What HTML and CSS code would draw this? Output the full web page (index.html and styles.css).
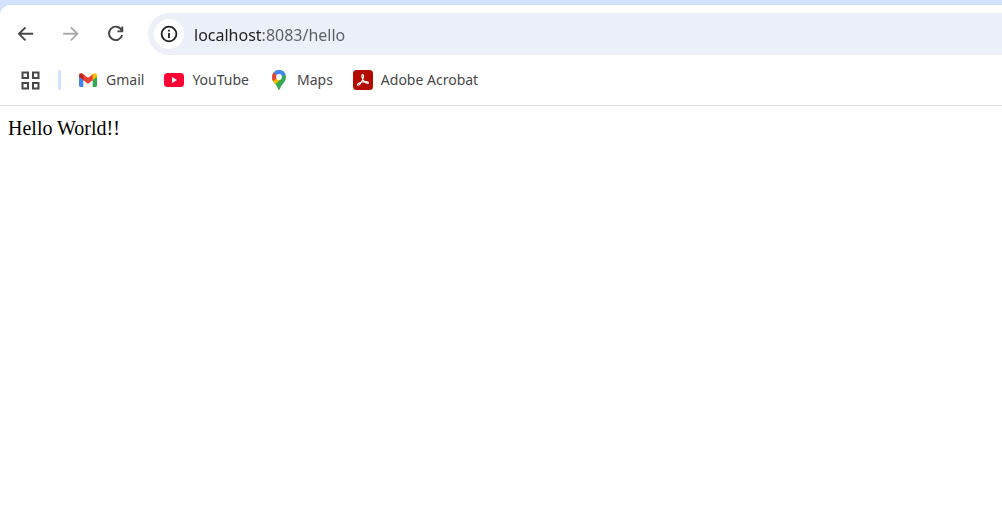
FILE: index.html
```html
<!DOCTYPE html>
<html lang="en">
<head>
<meta charset="utf-8">
<title>localhost:8083/hello</title>
<link rel="stylesheet" href="styles.css">
</head>
<body>
<header class="chrome">
  <div class="toolbar">
    <nav class="nav" aria-label="History">
      <button class="nav-button" type="button" aria-label="Back">
        <svg class="icon" viewBox="0 0 20 20"><path d="M17.200 9.800H3.500M9.500 3.300 3 9.800l6.500 6.500"/></svg>
      </button>
      <button class="nav-button" type="button" aria-label="Forward" disabled>
        <svg class="icon" viewBox="0 0 20 20"><path d="M2.200 9.800h13.700M9.900 3.300l6.500 6.500-6.500 6.500"/></svg>
      </button>
      <button class="nav-button" type="button" aria-label="Reload">
        <svg class="icon" viewBox="0 0 20 20"><path d="M15.600 6.200A6.700 6.700 0 1 0 16.200 11M16.300 2.500v4.900h-4.900"/></svg>
      </button>
    </nav>
    <div class="omnibox">
      <button class="site-info" type="button" aria-label="View site information">
        <svg class="info-icon" viewBox="0 0 18 18"><circle cx="9" cy="9" r="7.400"/><path d="M9 8v5M9 4.800v1.800"/></svg>
      </button>
      <input class="url" type="text" aria-label="Address" value="localhost:8083/hello" spellcheck="false">
    </div>
  </div>
  <nav class="bookmarks" aria-label="Bookmarks">
    <button class="tab-groups" type="button" aria-label="Tab groups">
      <svg class="grid-icon" viewBox="0 0 21 21"><path d="M2.500 2.500h5.500v5.500H2.500zM13 2.500h5.500v5.500H13zM2.500 13h5.500v5.500H2.500zM13 13h5.500v5.500H13z"/></svg>
    </button>
    <span class="divider"></span>
    <a class="bookmark" href="#gmail">
      <svg class="logo" viewBox="0 0 20 20">
        <path fill="#4285f4" d="M1 6v9.500c0 .8.6 1.400 1.400 1.400h2.900V9.300z"/>
        <path fill="#34a853" d="M14.700 16.900h2.900c.8 0 1.400-.6 1.400-1.400V6l-4.300 3.300z"/>
        <path fill="#ea4335" d="M4.800 10V4L10 7.700 15.200 4v6L10 13.800z"/>
        <path fill="#c5221f" d="M1 5.200v1.500l4.300 3.200V4.500l-.9-.7C2.900 2.700 1 3.600 1 5.200z"/>
        <path fill="#fbbc04" d="M19 5.200v1.500l-4.300 3.200V4.500l.9-.7C17.100 2.700 19 3.600 19 5.200z"/>
      </svg>
      <span>Gmail</span>
    </a>
    <a class="bookmark" href="#youtube">
      <svg class="logo" viewBox="0 0 20 20">
        <rect y="3" width="20" height="14" rx="3.500" fill="#ff0033"/>
        <path fill="#fff" d="M8 7v6l5.200-3z"/>
      </svg>
      <span>YouTube</span>
    </a>
    <a class="bookmark" href="#maps">
      <svg class="logo" viewBox="0 0 20 20">
        <defs><clipPath id="pin"><path d="M10 0a7 7 0 0 1 7 7c0 3.200-1.600 5-3.200 7.100C12.300 16 11.500 17.200 11 18.800c-.3 1.500-1.700 1.500-2 0-.5-1.600-1.300-2.800-2.800-4.700C4.600 12 3 10.200 3 7a7 7 0 0 1 7-7z"/></clipPath></defs>
        <g clip-path="url(#pin)">
          <path fill="#34a853" d="M0 0h20v20H0z"/>
          <path fill="#fbbc04" d="M0 8 5 7l7 2-6.500 6L0 14z"/>
          <path fill="#ea4335" d="M4.700 2 10 7 4.300 11 0 9V2z"/>
          <path fill="#4285f4" d="M4.700 2.500 7 0h10l-.3 4.500L10 7z"/>
        </g>
        <circle cx="10" cy="7" r="2.900" fill="#fff"/>
      </svg>
      <span>Maps</span>
    </a>
    <a class="bookmark" href="#acrobat">
      <svg class="logo" viewBox="0 0 20 20">
        <rect width="20" height="20" rx="3.500" fill="#b30b00"/>
        <path fill="none" stroke="#fff" stroke-width="1.200" stroke-linejoin="round" d="M9.500 4.500c1.600-.2 1.200 3-.2 6-1.400 2.900-3.600 5.400-4.600 4.600-1-.9 1.400-2.400 4.200-3.100 2.800-.7 6.600-.7 6.600.7 0 1.500-2.800.5-4.500-1.500C9.100 9.100 8 4.800 9.500 4.500z"/>
      </svg>
      <span>Adobe Acrobat</span>
    </a>
  </nav>
</header>
<main class="page">Hello World!!</main>
</body>
</html>
```
FILE: styles.css
```css
* {
  box-sizing: border-box;
}

body {
  margin: 0;
  background: #fff;
}

button {
  display: flex;
  align-items: center;
  justify-content: center;
  padding: 0;
  border: 0;
  background: transparent;
  color: #474747;
}

svg {
  display: block;
  flex: none;
}

.chrome {
  padding-top: 5px;
  border-bottom: 1px solid #dedede;
  background: #d3e3fd;
  font-family: "Segoe UI", "Noto Sans", sans-serif;
}

.toolbar {
  display: flex;
  padding-top: 8px;
  border-top-left-radius: 10px;
  background: #fff;
}

.nav {
  display: flex;
  align-items: center;
  gap: 9px;
  padding: 0 14px 0 8px;
}

.nav-button {
  width: 36px;
  height: 36px;
  border-radius: 50%;
}

.nav-button:disabled {
  color: #ababab;
}

.icon {
  width: 20px;
  height: 20px;
  fill: none;
  stroke: currentColor;
  stroke-width: 1.9;
}

.omnibox {
  display: flex;
  flex: 1;
  align-items: center;
  gap: 10px;
  height: 42px;
  padding-left: 6px;
  border-radius: 21px 0 0 21px;
  background: #ebf0f9;
}

.site-info {
  width: 30px;
  height: 30px;
  border-radius: 50%;
  background: #fff;
  color: #1f1f1f;
}

.info-icon {
  width: 18px;
  height: 18px;
  fill: none;
  stroke: currentColor;
  stroke-width: 1.8;
}

/* The host is darker than the port and path. */
.url {
  flex: 1;
  min-width: 0;
  padding: 2px 0 0;
  border: 0;
  outline: 0;
  background: linear-gradient(to right, #1f1f1f 68px, #5a5d61 68px);
  -webkit-background-clip: text;
  background-clip: text;
  color: #1f1f1f;
  -webkit-text-fill-color: transparent;
  font-family: inherit;
  font-size: 16px;
  line-height: 24px;
}

.bookmarks {
  display: flex;
  align-items: center;
  height: 50px;
  padding-left: 20px;
  gap: 20px;
  background: #fff;
}

.grid-icon {
  width: 21px;
  height: 21px;
  fill: none;
  stroke: #474747;
  stroke-width: 2;
}

.divider {
  width: 3px;
  height: 20px;
  margin: 0 -3px;
  border-radius: 2px;
  background: #d3e3fd;
}

.bookmark {
  display: flex;
  align-items: center;
  gap: 8px;
  color: #474747;
  font-size: 14px;
  line-height: 20px;
  text-decoration: none;
  white-space: nowrap;
}

.logo {
  width: 20px;
  height: 20px;
}

.page {
  padding: 10px 8px;
  color: #000;
  font-family: "Liberation Serif", serif;
  font-size: 20px;
  line-height: 24px;
}
```
